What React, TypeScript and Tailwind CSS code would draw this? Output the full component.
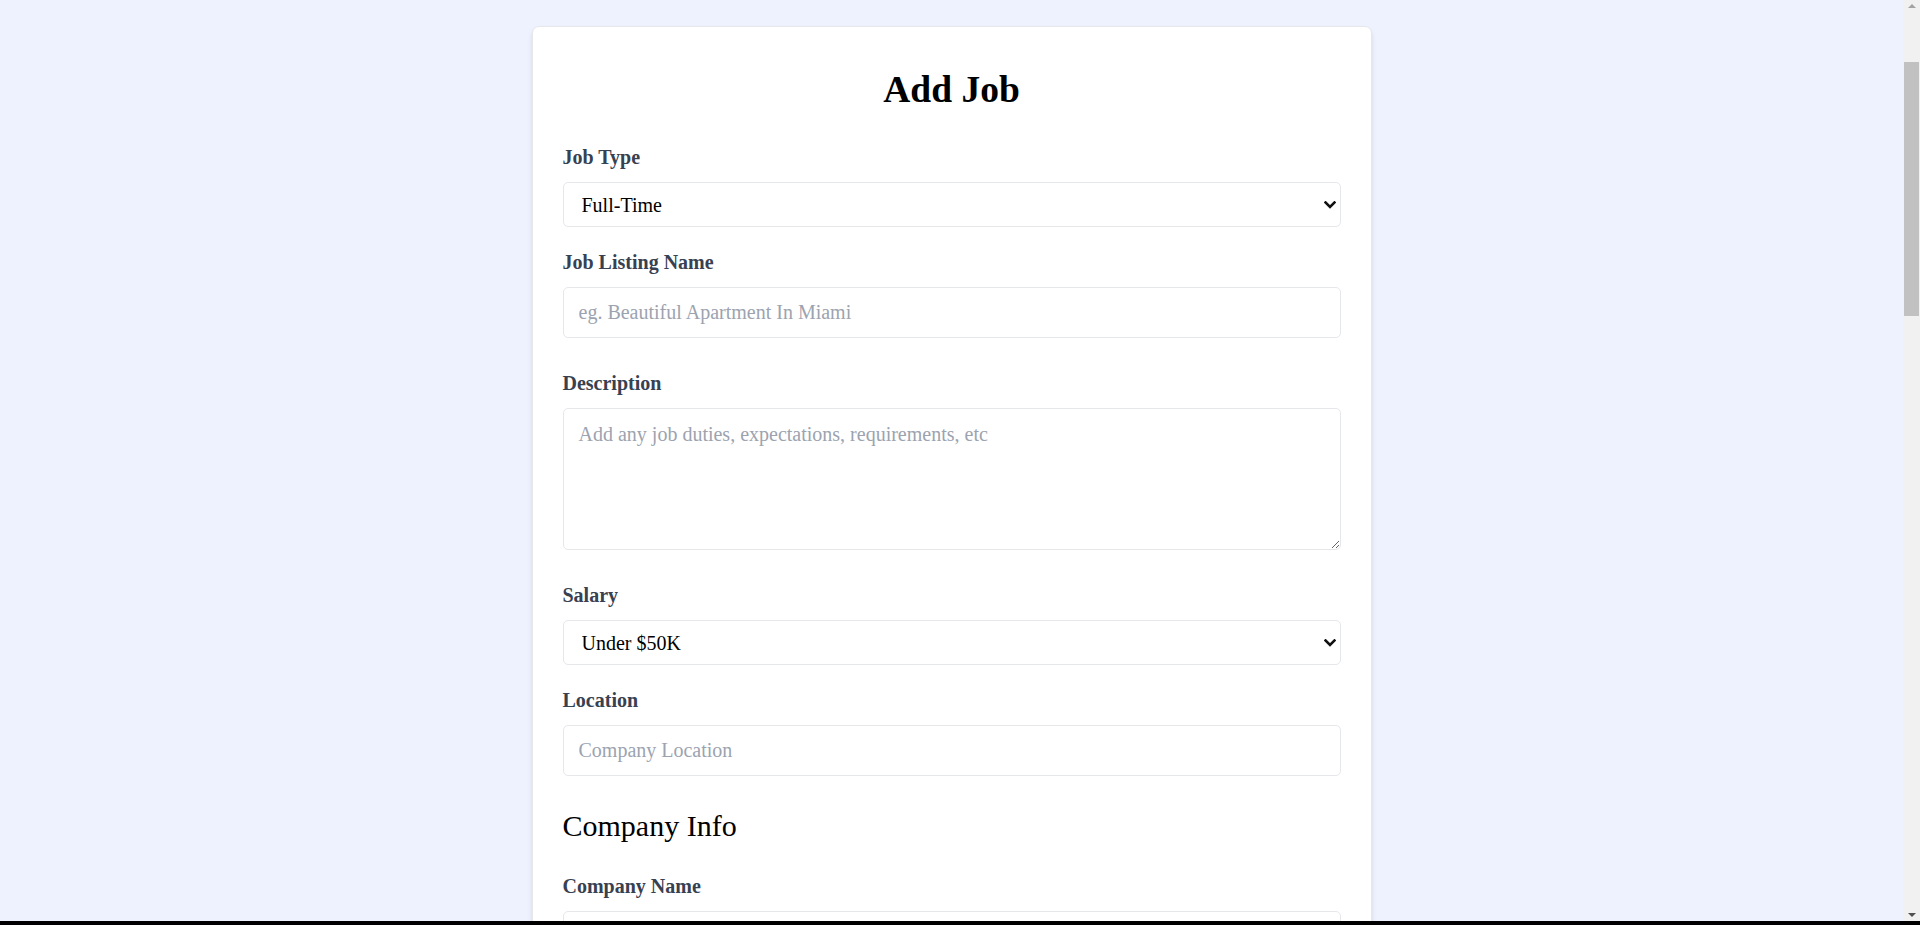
import React from 'react'

function Chevron() {
  return (
    <svg
      className="pointer-events-none absolute right-[5px] top-1/2 -translate-y-1/2"
      width="12"
      height="8"
      viewBox="0 0 12 8"
      fill="none"
    >
      <path d="M1.5 1.5 L6 6 L10.5 1.5" stroke="#111" strokeWidth="2.6" strokeLinecap="square" />
    </svg>
  )
}

function Label({ children, htmlFor }: { children: React.ReactNode; htmlFor: string }) {
  return (
    <label htmlFor={htmlFor} className="mb-[10px] block text-[20px] leading-[30px] font-bold text-[#374151]">
      {children}
    </label>
  )
}

function SelectField({ id, label, value, options }: { id: string; label: string; value: string; options: string[] }) {
  return (
    <div className="mb-[20px]">
      <Label htmlFor={id}>{label}</Label>
      <div className="relative">
        <select
          id={id}
          defaultValue={value}
          className="block h-[45px] w-full appearance-none rounded-[5px] border border-[#e5e7eb] bg-white pl-[18px] pr-[30px] text-[20px] text-black outline-none"
        >
          {options.map((o) => (
            <option key={o}>{o}</option>
          ))}
        </select>
        <Chevron />
      </div>
    </div>
  )
}

function InputField({ id, label, placeholder, className = 'mb-[30px]' }: { id: string; label: string; placeholder: string; className?: string }) {
  return (
    <div className={className}>
      <Label htmlFor={id}>{label}</Label>
      <input
        id={id}
        placeholder={placeholder}
        className="block h-[51px] w-full rounded-[5px] border border-[#e5e7eb] px-[15px] text-[20px] text-black outline-none placeholder:text-[#9ca3af]"
      />
    </div>
  )
}

// the window's scrollbar, as it shows in the screenshot
function FakeScrollbar() {
  return (
    <div className="fixed top-0 right-0 bottom-0 flex w-[17px] flex-col items-center bg-[#f1f1f1]">
      <div className="mt-[4px] h-0 w-0 border-x-[4px] border-b-[4px] border-x-transparent border-b-[#a3a3a3]" />
      <div className="mt-[54px] h-[254px] w-[15px] bg-[#c1c1c1]" />
      <div className="mt-auto mb-[8px] h-0 w-0 border-x-[4px] border-t-[4px] border-x-transparent border-t-[#505050]" />
    </div>
  )
}

export default function App() {
  return (
    <div className="min-h-screen bg-[#eef2ff] pt-[26px] pr-[17px] pb-[150px] font-['Liberation_Serif',serif]">
      <div className="mx-auto w-[840px] rounded-[7px] border border-[#e5e7eb] bg-white px-[30px] py-[40px] shadow-md">
        <form>
          <h2 className="mb-[30px] text-center text-[37.5px] leading-[45px] font-bold text-black">Add Job</h2>

          <SelectField id="type" label="Job Type" value="Full-Time" options={['Full-Time', 'Part-Time', 'Remote', 'Internship']} />

          <InputField id="title" label="Job Listing Name" placeholder="eg. Beautiful Apartment In Miami" />

          {/* Description */}
          <div className="mb-[30px]">
            <Label htmlFor="description">Description</Label>
            <textarea
              id="description"
              placeholder="Add any job duties, expectations, requirements, etc"
              className="block h-[142px] w-full rounded-[5px] border border-[#e5e7eb] px-[15px] py-[10px] text-[20px] leading-[30px] text-black outline-none placeholder:text-[#9ca3af]"
            />
          </div>

          <SelectField
            id="salary"
            label="Salary"
            value="Under $50K"
            options={['Under $50K', '$50K - 60K', '$60K - 70K', '$70K - 80K', '$80K - 90K', 'Over $200K']}
          />

          <InputField id="location" label="Location" placeholder="Company Location" />

          <h3 className="mb-[25px] text-[30px] leading-[40px] text-black">Company Info</h3>

          <InputField id="company" label="Company Name" placeholder="Company Name" className="mb-[20px]" />

          <div className="mb-[20px]">
            <Label htmlFor="company_description">Company Description</Label>
            <textarea
              id="company_description"
              placeholder="What does your company do?"
              className="block h-[142px] w-full rounded-[5px] border border-[#e5e7eb] px-[15px] py-[10px] text-[20px] leading-[30px] text-black outline-none placeholder:text-[#9ca3af]"
            />
          </div>

          <InputField id="contact_email" label="Contact Email" placeholder="Email address for applicants" className="mb-[20px]" />
          <InputField id="contact_phone" label="Contact Phone" placeholder="Optional phone for applicants" className="mb-[20px]" />

          <button
            type="submit"
            className="w-full rounded-full bg-[#6366f1] px-[20px] py-[10px] text-[20px] font-bold text-white"
          >
            Add Job
          </button>
        </form>
      </div>
      <FakeScrollbar />
      <div className="fixed right-0 bottom-0 left-0 h-[4px] bg-black" />
    </div>
  )
}
